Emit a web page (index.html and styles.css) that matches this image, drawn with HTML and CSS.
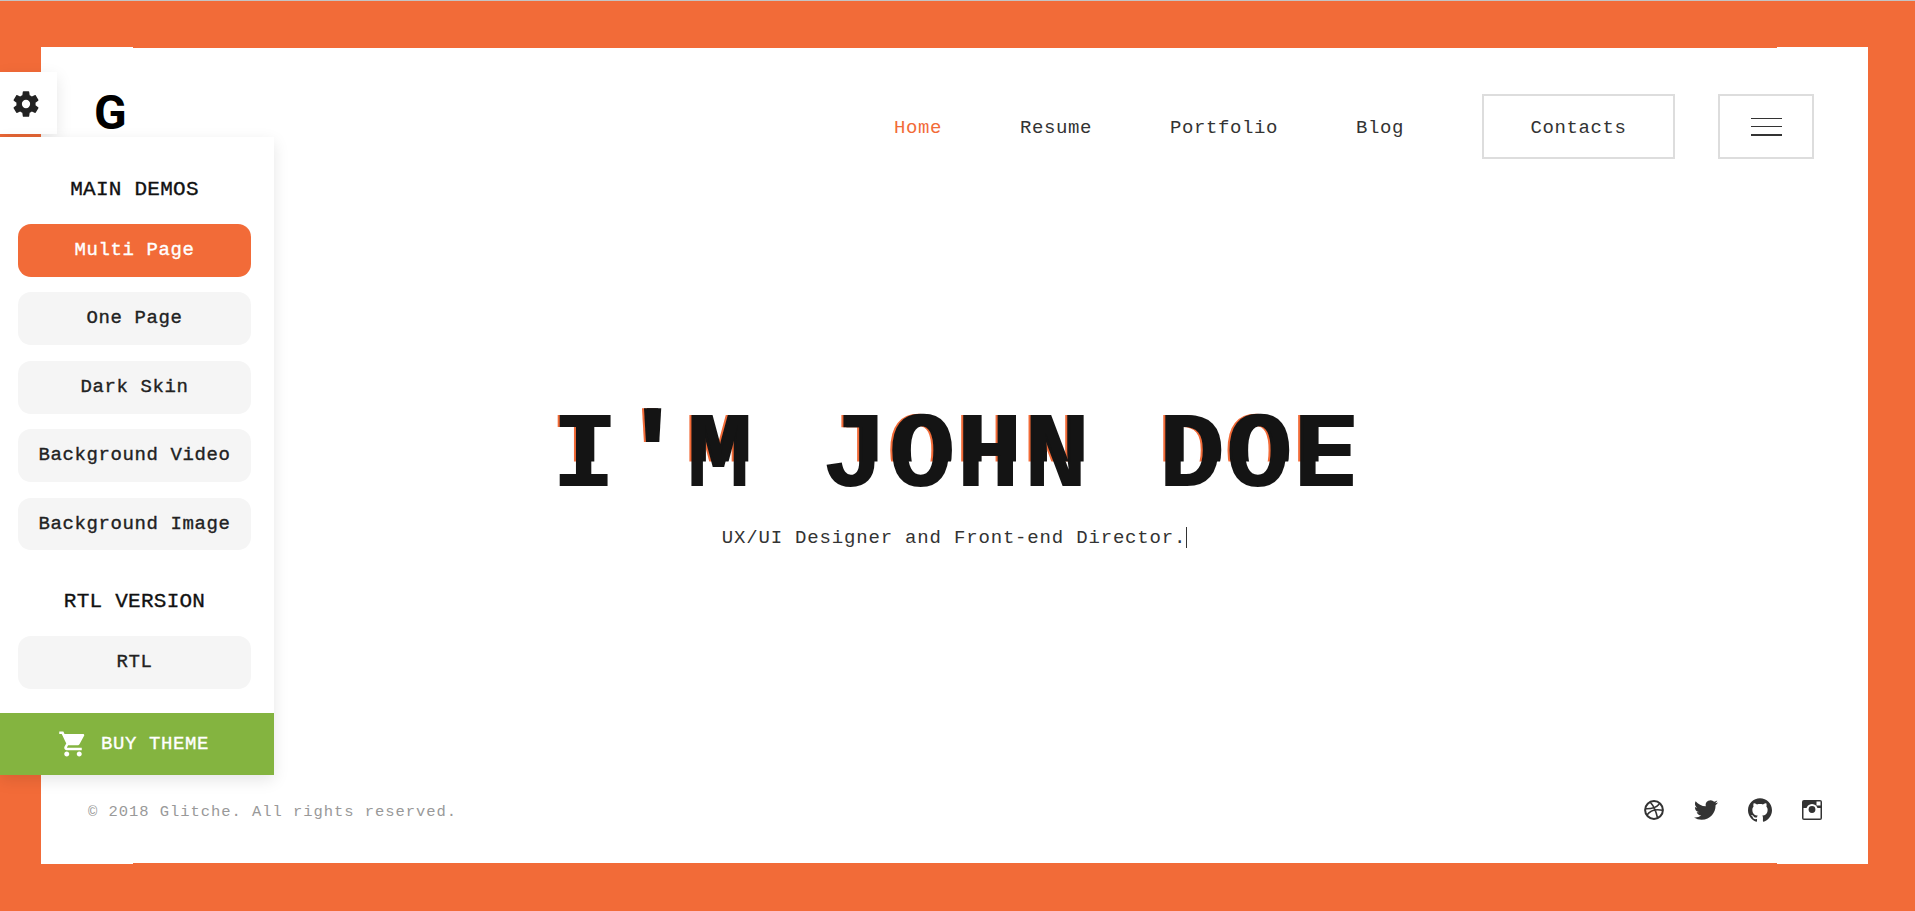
FILE: index.html
```html
<!DOCTYPE html>
<html lang="en">
<head>
  <meta charset="UTF-8">
  <title>Glitche</title>
  <link rel="stylesheet" href="styles.css">
</head>
<body>

  <div class="frame">
    <header class="header">
      <div class="logo">G</div>
      <nav class="nav">
        <a class="nav-link active">Home</a>
        <a class="nav-link">Resume</a>
        <a class="nav-link">Portfolio</a>
        <a class="nav-link">Blog</a>
        <a class="nav-btn">Contacts</a>
      </nav>
      <div class="burger"><span></span><span></span><span class="thick"></span></div>
    </header>

    <main class="hero">
      <h1 class="title" data-text="I'M JOHN DOE">I'M JOHN DOE</h1>
      <div class="subtitle">UX/UI Designer and Front-end Director.<span class="cursor"></span></div>
    </main>

    <footer class="footer">
      <div class="copy">© 2018 Glitche. All rights reserved.</div>
      <div class="socials">
        <svg class="ico-dribbble" viewBox="0 0 20 20" fill="none" stroke="#333" stroke-width="1.6">
          <circle cx="10" cy="10" r="8.9" stroke-width="2"/>
          <path d="M6.3 2.2c2.8 3 5.600 8 7.200 15.700M1.500 8.800c5.200.2 10.500-.8 13.800-4.800M2.800 15.300c3-4.400 8-6.800 15.800-5"/>
        </svg>
        <svg class="ico-twitter" viewBox="0 0 24 24" fill="#333"><path d="M23.953 4.57a10 10 0 01-2.825.775 4.958 4.958 0 002.163-2.723c-.951.555-2.005.959-3.127 1.184a4.92 4.92 0 00-8.384 4.482C7.69 8.095 4.067 6.13 1.64 3.162a4.822 4.822 0 00-.666 2.475c0 1.71.87 3.213 2.188 4.096a4.904 4.904 0 01-2.228-.616v.06a4.923 4.923 0 003.946 4.827 4.996 4.996 0 01-2.212.085 4.936 4.936 0 004.604 3.417 9.867 9.867 0 01-6.102 2.105c-.39 0-.779-.023-1.17-.067a13.995 13.995 0 007.557 2.209c9.053 0 13.998-7.496 13.998-13.985 0-.21 0-.42-.015-.63A9.935 9.935 0 0024 4.59z"/></svg>
        <svg class="ico-github" viewBox="0 0 24 24" fill="#333"><path d="M12 .297c-6.63 0-12 5.373-12 12 0 5.303 3.438 9.8 8.205 11.385.6.113.82-.258.82-.577 0-.285-.01-1.04-.015-2.04-3.338.724-4.042-1.61-4.042-1.61C4.422 18.07 3.633 17.7 3.633 17.7c-1.087-.744.084-.729.084-.729 1.205.084 1.838 1.236 1.838 1.236 1.07 1.835 2.809 1.305 3.495.998.108-.776.417-1.305.76-1.605-2.665-.3-5.466-1.332-5.466-5.93 0-1.31.465-2.38 1.235-3.22-.135-.303-.54-1.523.105-3.176 0 0 1.005-.322 3.3 1.23.96-.267 1.98-.399 3-.405 1.02.006 2.04.138 3 .405 2.28-1.552 3.285-1.23 3.285-1.23.645 1.653.24 2.873.12 3.176.765.84 1.23 1.91 1.23 3.22 0 4.61-2.805 5.625-5.475 5.92.42.36.81 1.096.81 2.22 0 1.606-.015 2.896-.015 3.286 0 .315.21.69.825.57C20.565 22.092 24 17.592 24 12.297c0-6.627-5.373-12-12-12"/></svg>
        <svg class="ico-instagram" viewBox="0 0 20 20">
          <rect width="20" height="20" rx="2" fill="#333"/>
          <rect x="1.500" y="8" width="17" height="10.500" fill="#fff"/>
          <rect x="14.500" y="1.500" width="4" height="4" fill="#fff"/>
          <circle cx="10" cy="9.500" r="5.600" fill="#fff"/>
          <circle cx="10" cy="9.500" r="3.400" fill="#333"/>
        </svg>
      </div>
    </footer>
  </div>

  <aside class="demo-panel">
    <div class="demo-toggle">
      <svg viewBox="0 0 24 24" fill="#222"><path fill-rule="evenodd" d="M19.14 12.94c.04-.3.06-.61.06-.94 0-.32-.02-.64-.07-.94l2.03-1.58c.18-.14.23-.41.12-.61l-1.92-3.32c-.12-.22-.37-.29-.59-.22l-2.39.96c-.5-.38-1.03-.7-1.62-.94l-.36-2.54c-.04-.24-.24-.41-.48-.41h-3.84c-.24 0-.43.17-.47.41l-.36 2.54c-.59.24-1.13.57-1.62.94l-2.39-.96c-.22-.08-.47 0-.59.22L2.74 8.87c-.12.21-.08.47.12.61l2.03 1.58c-.05.3-.09.63-.09.94s.02.64.07.94l-2.03 1.58c-.18.14-.23.41-.12.61l1.92 3.32c.12.22.37.29.59.22l2.39-.96c.5.38 1.03.7 1.62.94l.36 2.54c.05.24.24.41.48.41h3.84c.24 0 .44-.17.47-.41l.36-2.54c.59-.24 1.13-.56 1.62-.94l2.39.96c.22.08.47 0 .59-.22l1.92-3.32c.12-.22.07-.47-.12-.61l-2.01-1.58zM12 15.100a3.100 3.100 0 1 1 0-6.200 3.100 3.100 0 0 1 0 6.200z"/></svg>
    </div>
    <div class="demo-box">
      <div class="demo-title">MAIN DEMOS</div>
      <div class="demo-list">
        <a class="demo-btn active">Multi Page</a>
        <a class="demo-btn">One Page</a>
        <a class="demo-btn">Dark Skin</a>
        <a class="demo-btn">Background Video</a>
        <a class="demo-btn">Background Image</a>
      </div>
      <div class="demo-title rtl">RTL VERSION</div>
      <div class="demo-list">
        <a class="demo-btn">RTL</a>
      </div>
      <a class="buy-btn">
        <svg viewBox="0 0 24 24" fill="#fff"><path d="M7 18c-1.100 0-1.990.9-1.990 2S5.900 22 7 22s2-.9 2-2-.9-2-2-2zM1 2v2h2l3.600 7.590-1.350 2.450c-.16.28-.25.61-.25.96 0 1.100.9 2 2 2h12v-2H7.420c-.14 0-.25-.11-.25-.25l.03-.12.9-1.630h7.450c.75 0 1.410-.41 1.750-1.030l3.580-6.490c.08-.14.12-.31.12-.48 0-.55-.45-1-1-1H5.210l-.94-2H1zm16 16c-1.100 0-1.990.9-1.990 2s.89 2 1.990 2 2-.9 2-2-.9-2-2-2z"/></svg>
        BUY THEME
      </a>
    </div>
  </aside>

</body>
</html>
```

FILE: styles.css
```css
* {
  box-sizing: border-box;
}

html, body {
  height: 100%;
}

body {
  margin: 0;
  height: 911px;
  overflow: hidden;
  padding: 47px 47px 46px 41px;
  border-top: 1px solid #c4c4c4;
  background: #f26b38;
  color: #333;
  font-family: "Liberation Mono", monospace;
  font-size: 19px;
  letter-spacing: .6px;
}

/* white sheet, the 1px strips give the stepped edge */
.frame {
  position: relative;
  height: 100%;
  margin-top: -1px;
  background: #fff;
  display: flex;
  flex-direction: column;
}

.frame::before,
.frame::after {
  content: "";
  position: absolute;
  left: 92px;
  right: 91px;
  height: 1px;
  background: #f26b38;
}

.frame::before {
  top: 0;
}

.frame::after {
  bottom: 0;
}

.header {
  display: flex;
  align-items: flex-start;
  padding: 47px 54px 0;
}

.logo {
  font-family: Roboto, sans-serif;
  font-weight: 700;
  font-size: 48px;
  line-height: 38px;
  letter-spacing: 0;
  color: #000;
  margin-left: -1px;
}

.nav {
  margin-left: auto;
  display: flex;
  align-items: center;
  gap: 78px;
  height: 65px;
}

.nav-link {
  padding-top: 3px;
}

.nav-link.active {
  color: #f26b38;
}

.nav-btn {
  display: block;
  height: 65px;
  line-height: 64px;
  padding: 0 46.5px;
  border: 2px solid #ddd;
}

.burger {
  width: 96px;
  height: 65px;
  margin-left: 43px;
  border: 2px solid #ddd;
  display: flex;
  flex-direction: column;
  align-items: center;
  justify-content: center;
  gap: 7px;
}

.burger span {
  display: block;
  width: 31px;
  height: 1px;
  background: #333;
}

.burger .thick {
  height: 2px;
}

.hero {
  flex: 1;
  display: flex;
  flex-direction: column;
  align-items: center;
  justify-content: center;
}

/* glitch: top slice is doubled, orange edge behind it */
.title {
  position: relative;
  isolation: isolate;
  margin: 0 -3px 0 0;
  font-size: 107px;
  line-height: 100px;
  font-weight: 700;
  letter-spacing: 3.2px;
  color: #141414;
  white-space: nowrap;
}

.title::before,
.title::after {
  content: attr(data-text);
  position: absolute;
  top: 0;
  clip-path: inset(-10px -10px 46px -10px);
}

.title::before {
  left: -2px;
  z-index: -1;
  color: #f26b38;
}

.title::after {
  left: 3px;
  color: #141414;
}

.subtitle {
  margin-top: 18px;
  line-height: 24px;
  letter-spacing: .82px;
}

.cursor {
  display: inline-block;
  width: 1px;
  height: 21px;
  margin-left: 0;
  vertical-align: -5px;
  background: #333;
}

.footer {
  display: flex;
  justify-content: space-between;
  align-items: center;
  padding: 0 46px 42px 47px;
}

.copy {
  padding-top: 3px;
  font-size: 15.5px;
  letter-spacing: .95px;
  color: #999;
}

.socials {
  display: flex;
  align-items: center;
  gap: 30px;
}

.socials svg {
  display: block;
}

.ico-dribbble {
  width: 20px;
  height: 20px;
}

.ico-twitter,
.ico-github {
  width: 24px;
  height: 24px;
}

.ico-instagram {
  width: 20px;
  height: 20px;
}

/* demo switcher, sits over the page */
.demo-panel {
  position: absolute;
  left: 0;
  top: 72px;
}

.demo-toggle {
  width: 57px;
  height: 62px;
  background: #fff;
  box-shadow: 0 5px 15px rgba(0,0,0,0.1);
  display: flex;
  align-items: center;
  justify-content: center;
  padding: 2px 5px 0 0;
}

.demo-toggle svg {
  width: 32px;
  height: 32px;
}

.demo-box {
  width: 274px;
  margin-top: 3px;
  padding-top: 38px;
  background: #fff;
  box-shadow: 0 5px 15px rgba(0,0,0,0.1);
  position: relative;
}

.demo-title {
  height: 30px;
  line-height: 30px;
  margin-bottom: 19px;
  padding-right: 5px;
  font-size: 21px;
  letter-spacing: .25px;
  -webkit-text-stroke: .35px #111;
  color: #111;
  text-align: center;
}

.demo-title.rtl {
  margin-top: 37px;
}

.demo-list {
  display: flex;
  flex-direction: column;
  gap: 15.6px;
  padding: 0 23px 0 18px;
}

.demo-btn {
  display: block;
  height: 52.8px;
  line-height: 53.5px;
  border-radius: 13px;
  background: #f5f5f5;
  color: #222;
  -webkit-text-stroke: .35px #222;
  text-align: center;
  white-space: nowrap;
}

.demo-btn.active {
  background: #f26b38;
  color: #fff;
  -webkit-text-stroke: .35px #fff;
}

.buy-btn {
  display: flex;
  align-items: center;
  justify-content: center;
  gap: 13px;
  height: 62px;
  margin-top: 24px;
  padding-right: 7px;
  background: #84b440;
  color: #fff;
  -webkit-text-stroke: .35px #fff;
}

.buy-btn svg {
  width: 30px;
  height: 30px;
}
```
